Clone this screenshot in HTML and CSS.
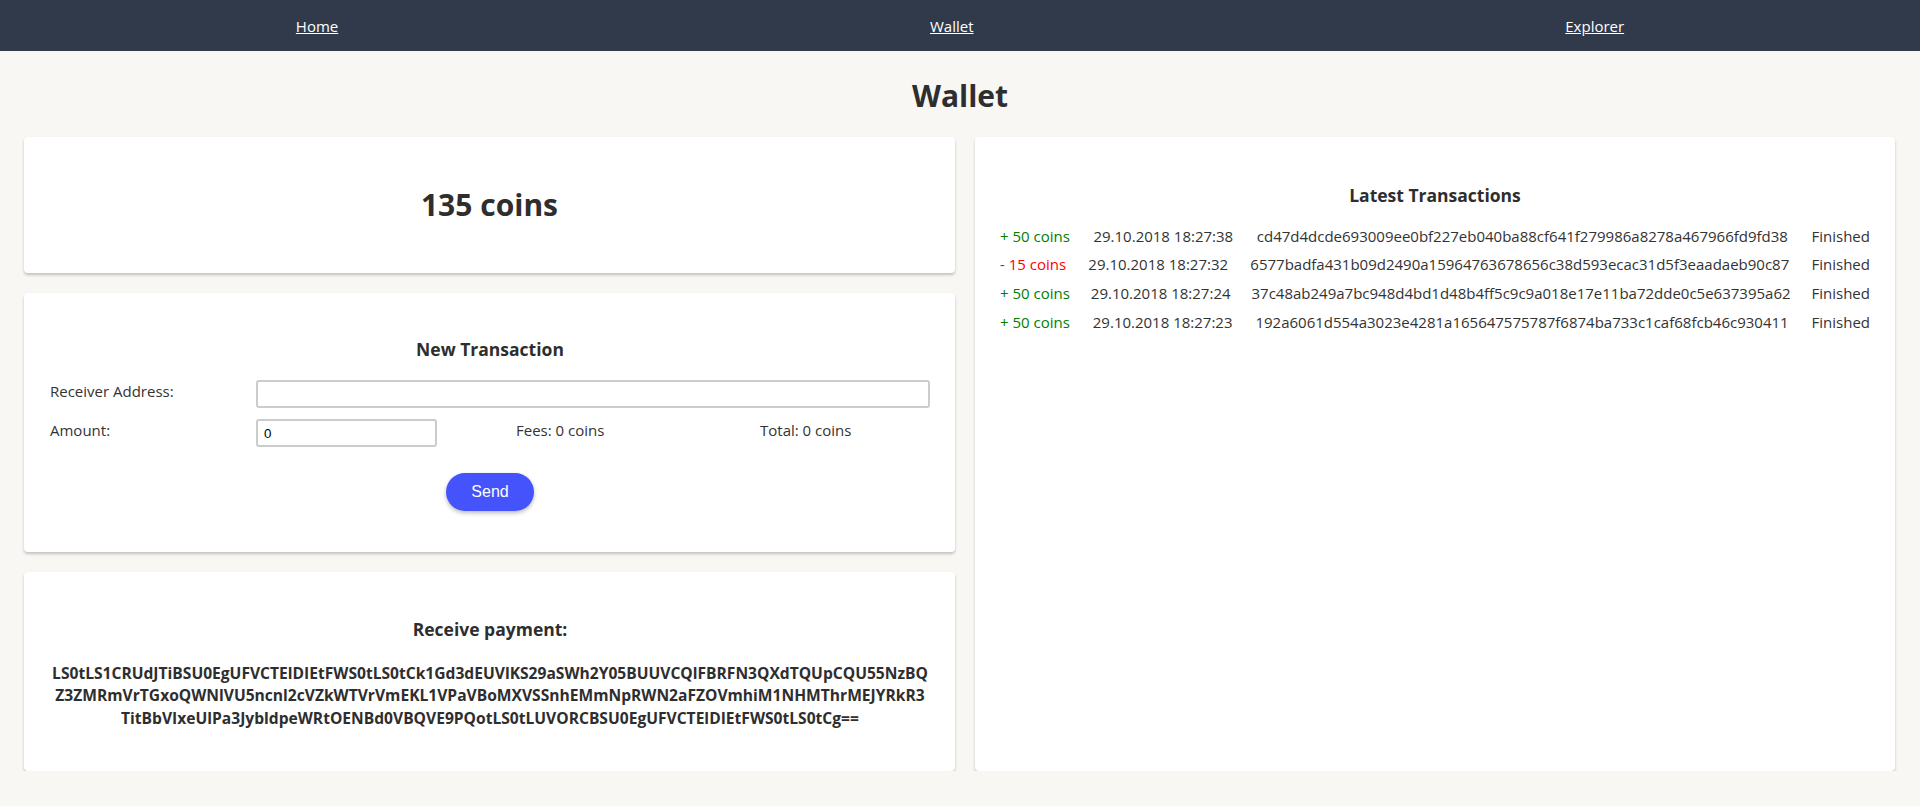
FILE: index.html
```html
<!DOCTYPE html>
<html lang="en">
<head>
<meta charset="utf-8">
<title>Wallet</title>
<link rel="stylesheet" href="styles.css">
</head>
<body>
<nav class="topnav">
  <a class="nav-link" href="#">Home</a>
  <a class="nav-link" href="#">Wallet</a>
  <a class="nav-link" href="#">Explorer</a>
</nav>
<h1 class="page-title">Wallet</h1>
<main class="layout">
  <div class="left-col">
    <section class="card balance-card">
      <h2 class="balance">135 coins</h2>
    </section>
    <section class="card tx-card">
      <h3 class="card-title">New Transaction</h3>
      <div class="tx-form">
        <label class="field-label">Receiver Address:</label>
        <input class="text-input receiver" type="text" value="">
        <label class="field-label">Amount:</label>
        <input class="text-input amount" type="text" value="0">
        <span class="field-info">Fees: 0 coins</span>
        <span class="field-info">Total: 0 coins</span>
      </div>
      <div class="btn-row"><button class="send-btn">Send</button></div>
    </section>
    <section class="card receive-card">
      <h3 class="card-title">Receive payment:</h3>
      <p class="address">LS0tLS1CRUdJTiBSU0EgUFVCTElDIEtFWS0tLS0tCk1Gd3dEUVlKS29aSWh2Y05BUUVCQlFBRFN3QXdTQUpCQU55NzBQ<wbr>Z3ZMRmVrTGxoQWNlVU5ncnl2cVZkWTVrVmEKL1VPaVBoMXVSSnhEMmNpRWN2aFZOVmhiM1NHMThrMEJYRkR3<wbr>TitBbVIxeUlPa3JybldpeWRtOENBd0VBQVE9PQotLS0tLUVORCBSU0EgUFVCTElDIEtFWS0tLS0tCg==</p>
    </section>
  </div>
  <section class="card history-card">
    <h3 class="card-title">Latest Transactions</h3>
    <div class="tx-list">
      <div class="tx-row"><span class="amt plus">+ 50 coins</span><span>29.10.2018 18:27:38</span><span>cd47d4dcde693009ee0bf227eb040ba88cf641f279986a8278a467966fd9fd38</span><span>Finished</span></div>
      <div class="tx-row"><span class="amt minus">- 15 coins</span><span>29.10.2018 18:27:32</span><span>6577badfa431b09d2490a15964763678656c38d593ecac31d5f3eaadaeb90c87</span><span>Finished</span></div>
      <div class="tx-row"><span class="amt plus">+ 50 coins</span><span>29.10.2018 18:27:24</span><span>37c48ab249a7bc948d4bd1d48b4ff5c9c9a018e17e11ba72dde0c5e637395a62</span><span>Finished</span></div>
      <div class="tx-row"><span class="amt plus">+ 50 coins</span><span>29.10.2018 18:27:23</span><span>192a6061d554a3023e4281a165647575787f6874ba733c1caf68fcb46c930411</span><span>Finished</span></div>
    </div>
  </section>
</main>
</body>
</html>
```

FILE: styles.css
```css
* { box-sizing: border-box; }

body {
  margin: 0;
  background: #f8f7f4;
  color: #333333;
  font-family: "Open Sans", "Noto Sans", sans-serif;
  font-size: 15px;
}

.topnav {
  height: 51px;
  background: #313a4b;
  display: flex;
  justify-content: space-around;
  align-items: center;
}

.nav-link {
  color: #ffffff;
  text-decoration: underline;
  font-size: 15px;
  line-height: 22px;
}

.page-title {
  margin: 25px 0 21px;
  height: 40px;
  line-height: 40px;
  text-align: center;
  font-size: 30px;
  font-weight: 700;
  color: #2e2e2e;
}

.layout {
  display: grid;
  grid-template-columns: 931px 920px;
  column-gap: 20px;
  padding: 0 25px 0 24px;
}

.left-col {
  display: flex;
  flex-direction: column;
  gap: 20px;
}

.card {
  background: #ffffff;
  border-radius: 4px;
  box-shadow: 0 2px 3px rgba(0, 0, 0, 0.22);
}

.balance-card {
  height: 136px;
  display: flex;
  align-items: center;
  justify-content: center;
}

.balance {
  margin: 0;
  font-size: 30px;
  font-weight: 700;
  line-height: 46px;
  color: #2e2e2e;
}

.card-title {
  margin: 0;
  text-align: center;
  font-size: 17.5px;
  font-weight: 700;
  line-height: 26px;
  color: #2e2e2e;
}

.tx-card {
  height: 259px;
  padding: 43px 25px 0 26px;
}

.tx-form {
  margin-top: 18px;
  display: grid;
  grid-template-columns: 206px 260px 244px 1fr;
  grid-template-rows: 28px 28px;
  row-gap: 11px;
  align-items: start;
}

.field-label,
.field-info {
  line-height: 22px;
  color: #333333;
}

.text-input {
  height: 28px;
  border: 2px solid #cccccc;
  border-radius: 3px;
  padding: 0 6px;
  font-family: "Liberation Sans", Arial, sans-serif;
  font-size: 13.33px;
  color: #000000;
  background: #ffffff;
}

.receiver {
  grid-column: 2 / 5;
  width: 100%;
}

.amount {
  width: 181px;
}

.btn-row {
  margin-top: 26px;
  display: flex;
  justify-content: center;
}

.send-btn {
  width: 88px;
  height: 38px;
  border: none;
  border-radius: 19px;
  background: #4453fc;
  color: #ffffff;
  font-family: "Liberation Sans", Arial, sans-serif;
  font-size: 16px;
  box-shadow: 0 2px 4px rgba(0, 0, 0, 0.28);
  padding: 0;
}

.receive-card {
  height: 199px;
  padding: 44px 25px 0 26px;
}

.address {
  margin: 20px 0 0;
  text-align: center;
  font-weight: 700;
  font-size: 15.6px;
  line-height: 22.25px;
  color: #2e2e2e;
}

.history-card {
  padding: 45px 25px 0 25px;
}

.tx-list {
  margin-top: 13.6px;
}

.tx-row {
  display: flex;
  justify-content: space-between;
  line-height: 28.7px;
  color: #333333;
}

.amt.plus { color: #008000; }
.amt.minus { color: #ff0000; }
```
